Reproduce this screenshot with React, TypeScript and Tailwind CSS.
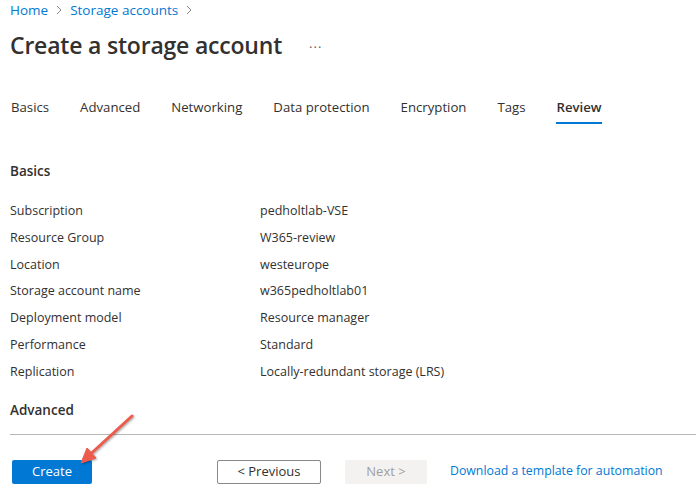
import React from "react";

const rows: [string, string][] = [
  ["Subscription", "pedholtlab-VSE"],
  ["Resource Group", "W365-review"],
  ["Location", "westeurope"],
  ["Storage account name", "w365pedholtlab01"],
  ["Deployment model", "Resource manager"],
  ["Performance", "Standard"],
  ["Replication", "Locally-redundant storage (LRS)"],
];

const tabs = ["Basics", "Advanced", "Networking", "Data protection", "Encryption", "Tags", "Review"];

function Chevron() {
  return (
    <svg width="8" height="10" viewBox="0 0 8 10" className="mx-[7px]">
      <path d="M2 1 L6 5 L2 9" fill="none" stroke="#8a8886" strokeWidth="1" />
    </svg>
  );
}

export default function App() {
  return (
    <div
      className="relative w-[696px] h-[491px] overflow-hidden bg-white text-[#323130]"
      style={{ fontFamily: '"Open Sans", "Noto Sans", "Liberation Sans", sans-serif' }}
    >
      {/* Breadcrumb */}
      <div className="flex items-center h-5 pl-[10px] text-[13.5px] text-[#0078d4]">
        <span>Home</span>
        <Chevron />
        <span>Storage accounts</span>
        <Chevron />
      </div>

      {/* Title */}
      <div className="flex items-center h-8 mt-[9px] pl-[10px]">
        <h1 className="text-[23px] font-semibold leading-8 tracking-[-0.2px]">Create a storage account</h1>
        <span className="ml-[27px] text-[13px] text-[#605e5c] leading-none pb-[4px] tracking-[1px]">...</span>
      </div>

      {/* Tabs */}
      <div className="flex mt-[31px] pl-[11px] gap-[31px] text-[13.2px]">
        {tabs.map((t) => (
          <div
            key={t}
            className={
              "h-8 flex items-center pt-[1px] border-b-2 " +
              (t === "Review" ? "border-[#0078d4] font-semibold" : "border-transparent")
            }
          >
            {t}
          </div>
        ))}
      </div>

      {/* Basics */}
      <div className="mt-[37px] pl-[10px] h-5 flex items-center text-[13.5px] font-semibold">Basics</div>

      <div className="mt-[17px] pl-[10px] text-[12.5px]">
        {rows.map(([k, v]) => (
          <div key={k} className="flex items-center h-[26.8px]">
            <div className="w-[250px]">{k}</div>
            <div>{v}</div>
          </div>
        ))}
      </div>

      <div className="mt-[15px] pl-[10px] h-5 flex items-center text-[13.5px] font-semibold">Advanced</div>

      <div className="mt-[13px] ml-[10px] h-px bg-[#b8b6b4]" />

      {/* Footer buttons */}
      <div className="mt-[25px] pl-[12px] flex items-center text-[13px]">
        <button className="w-[80px] h-6 bg-[#0078d4] text-white rounded-[2px] flex items-center justify-center">
          Create
        </button>
        <button className="ml-[125px] w-[104px] h-6 border border-[#8a8886] rounded-[2px] bg-white text-[#323130] flex items-center justify-center">
          &lt; Previous
        </button>
        <button className="ml-[24px] w-[82px] h-6 bg-[#f3f2f1] rounded-[2px] text-[#a19f9d] flex items-center justify-center">
          Next &gt;
        </button>
        <span className="ml-[23px] text-[12.3px] text-[#0078d4]">Download a template for automation</span>
      </div>

      {/* Annotation arrow */}
      <svg
        className="absolute left-0 top-0 pointer-events-none drop-shadow-[1px_1px_1px_rgba(0,0,0,0.35)]"
        width="696"
        height="491"
      >
        <line x1="132" y1="416" x2="90" y2="454.5" stroke="#ee5a4c" strokeWidth="3" strokeLinecap="round" />
        <polygon points="81,463 96,458 87,448" fill="#ee5a4c" stroke="#ee5a4c" strokeWidth="1" strokeLinejoin="round" />
      </svg>
    </div>
  );
}
